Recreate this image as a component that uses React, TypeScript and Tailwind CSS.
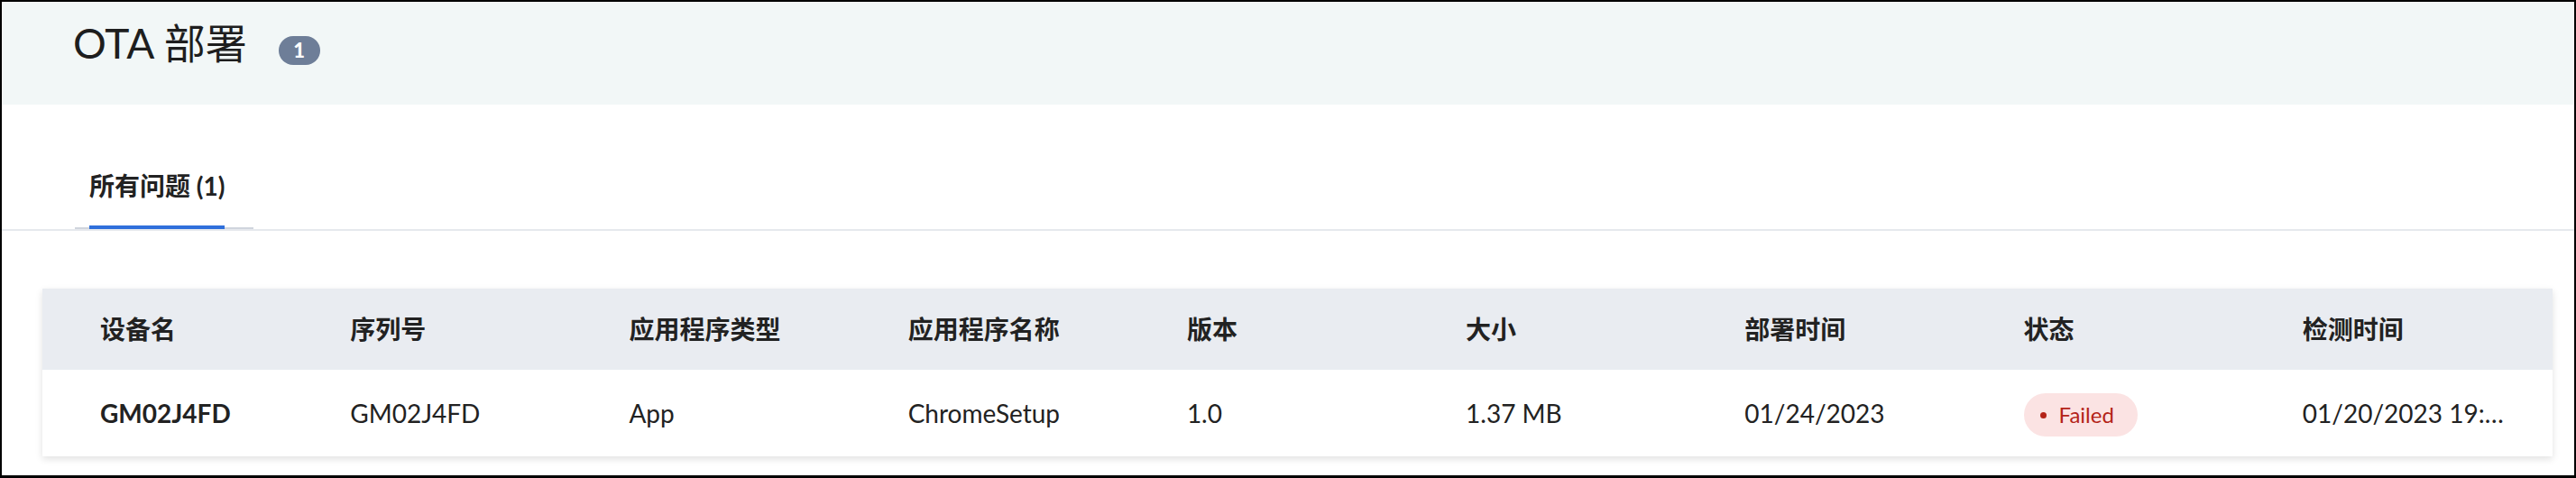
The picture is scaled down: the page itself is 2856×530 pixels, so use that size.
const columns = ['设备名', '序列号', '应用程序类型', '应用程序名称', '版本', '大小', '部署时间', '状态', '检测时间'];

const row = {
  device: 'GM02J4FD',
  serial: 'GM02J4FD',
  type: 'App',
  name: 'ChromeSetup',
  version: '1.0',
  size: '1.37 MB',
  deployedAt: '01/24/2023',
  status: 'Failed',
  detectedAt: '01/20/2023 19:…',
};

function StatusBadge({ label }: { label: string }) {
  return (
    <span className="inline-flex h-[48px] items-center gap-[14px] rounded-full bg-[#fbe3e3] pl-[18px] pr-[26px] text-[24px] text-[#b42318]">
      <span className="h-[7px] w-[7px] rounded-full bg-[#b42318]" />
      {label}
    </span>
  );
}

export default function App() {
  const cells = [
    row.serial,
    row.type,
    row.name,
    row.version,
    row.size,
    row.deployedAt,
  ];

  return (
    <div className="h-[530px] w-[2856px] overflow-hidden border-2 border-b-[3px] border-black bg-white font-[Lato,'Noto_Sans_CJK_SC',sans-serif] text-[#222222]">
      <div className="flex h-[114px] items-start bg-[#f2f7f7] pl-[79px] pt-[18px]">
        <h1 className="text-[46px] font-normal leading-[55px] text-[#1e1e1e]">OTA 部署</h1>
        <span className="ml-[35px] mt-[20px] flex h-[32px] w-[46px] items-center justify-center rounded-full bg-[#6e7e98] text-[22px] font-black leading-none text-white">
          1
        </span>
      </div>

      <div className="border-b-2 border-[#e6e9ed] pl-[81px] pt-[73px]">
        <div className="inline-flex border-b-2 border-[#d0d5dd] pl-[16px] pr-[32px]">
          <span className="-mb-[2px] border-b-4 border-[#2f6fdb] pb-[27px] text-[28px] font-bold leading-[34px] text-[#222222]">
            所有问题 (1)
          </span>
        </div>
      </div>

      <div className="ml-[45px] mr-[24px] mt-[64px] bg-white shadow-[0_3px_8px_rgba(0,0,0,0.12)]">
        <div className="grid h-[90px] grid-cols-9 items-center bg-[#e9ecf1] text-[28px] font-bold text-[#222222]">
          {columns.map((c, i) => (
            <div key={c} className={i === 0 ? 'pl-[64px]' : 'pl-[32px]'}>
              {c}
            </div>
          ))}
        </div>
        <div className="grid h-[96px] grid-cols-9 items-center text-[28px] text-[#222222]">
          <div className="pl-[64px] font-bold">{row.device}</div>
          {cells.map((v, i) => (
            <div key={i} className="pl-[32px]">
              {v}
            </div>
          ))}
          <div className="pl-[32px]">
            <StatusBadge label={row.status} />
          </div>
          <div className="whitespace-nowrap pl-[32px]">{row.detectedAt}</div>
        </div>
      </div>
    </div>
  );
}
